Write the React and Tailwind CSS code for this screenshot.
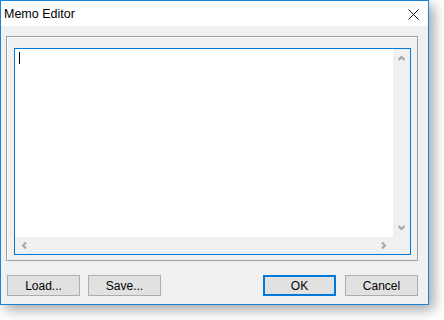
import React from "react";

const font = { fontFamily: '"Liberation Sans", Arial, sans-serif' };

function Chevron({ dir }) {
  const paths = {
    up: "M0.5 5 L3.5 2 L6.5 5",
    down: "M0.5 1 L3.5 4 L6.5 1",
    left: "M5 0.5 L2 3.5 L5 6.5",
    right: "M1 0.5 L4 3.5 L1 6.5",
  };
  const vertical = dir === "up" || dir === "down";
  return (
    <svg
      width={vertical ? 7 : 6}
      height={vertical ? 6 : 7}
      viewBox={vertical ? "0 0 7 6" : "0 0 6 7"}
      className="block"
    >
      <path d={paths[dir]} fill="none" stroke="#a3a3a3" strokeWidth="2" />
    </svg>
  );
}

function Button({ children, primary, className = "" }) {
  return (
    <button
      className={`w-[73px] h-[21px] bg-[#e1e1e1] text-[12px] text-black flex items-center justify-center ${
        primary ? "border-2 border-[#0078d7]" : "border border-[#adadad]"
      } ${className}`}
    >
      {children}
    </button>
  );
}

export default function App() {
  return (
    <div className="w-[444px] h-[320px] bg-white" style={font}>
      <div className="w-[429px] h-[305px] border border-[#1883d7] bg-[#f0f0f0] flex flex-col shadow-[5px_5px_12px_rgba(0,0,0,0.35)]">
        {/* Title bar */}
        <div className="h-[25px] bg-white flex items-center justify-between pl-[3px] pr-[9px] shrink-0">
          <span className="text-[12.5px] text-black leading-none mt-[1px]">Memo Editor</span>
          <svg width="11" height="11" viewBox="0 0 11 11" className="block mt-[1px]">
            <path d="M0.5 0.5 L10.5 10.5 M10.5 0.5 L0.5 10.5" stroke="#111" strokeWidth="1" />
          </svg>
        </div>

        {/* Body */}
        <div className="flex-1 flex flex-col">
          {/* Group box */}
          <div className="mt-[10px] ml-[5px] w-[412px] h-[225px] border border-[#a0a0a0]">
            <div className="w-full h-full border-t border-l border-white pt-[10px] pl-[6px] pr-[5px] pb-[4px]">
              {/* Memo */}
              <div className="w-[397px] h-[207px] border border-[#0078d7] bg-white flex flex-col">
                <div className="flex flex-1 min-h-0">
                  <div className="flex-1 pl-[4px] pt-[3px]">
                    <div className="w-px h-[12px] bg-black" />
                  </div>
                  <div className="w-[17px] bg-[#f0f0f0] flex flex-col justify-between items-center py-[6px]">
                    <Chevron dir="up" />
                    <Chevron dir="down" />
                  </div>
                </div>
                <div className="h-[17px] flex shrink-0">
                  <div className="flex-1 bg-[#f0f0f0] flex items-center justify-between px-[6px]">
                    <Chevron dir="left" />
                    <Chevron dir="right" />
                  </div>
                  <div className="w-[17px] bg-[#f0f0f0]" />
                </div>
              </div>
            </div>
          </div>

          {/* Buttons */}
          <div className="mt-[14px] flex items-center pl-[6px] pr-[10px]">
            <Button>Load...</Button>
            <Button className="ml-[8px]">Save...</Button>
            <div className="flex-1" />
            <Button primary>OK</Button>
            <Button className="ml-[9px]">Cancel</Button>
          </div>
        </div>
      </div>
    </div>
  );
}
